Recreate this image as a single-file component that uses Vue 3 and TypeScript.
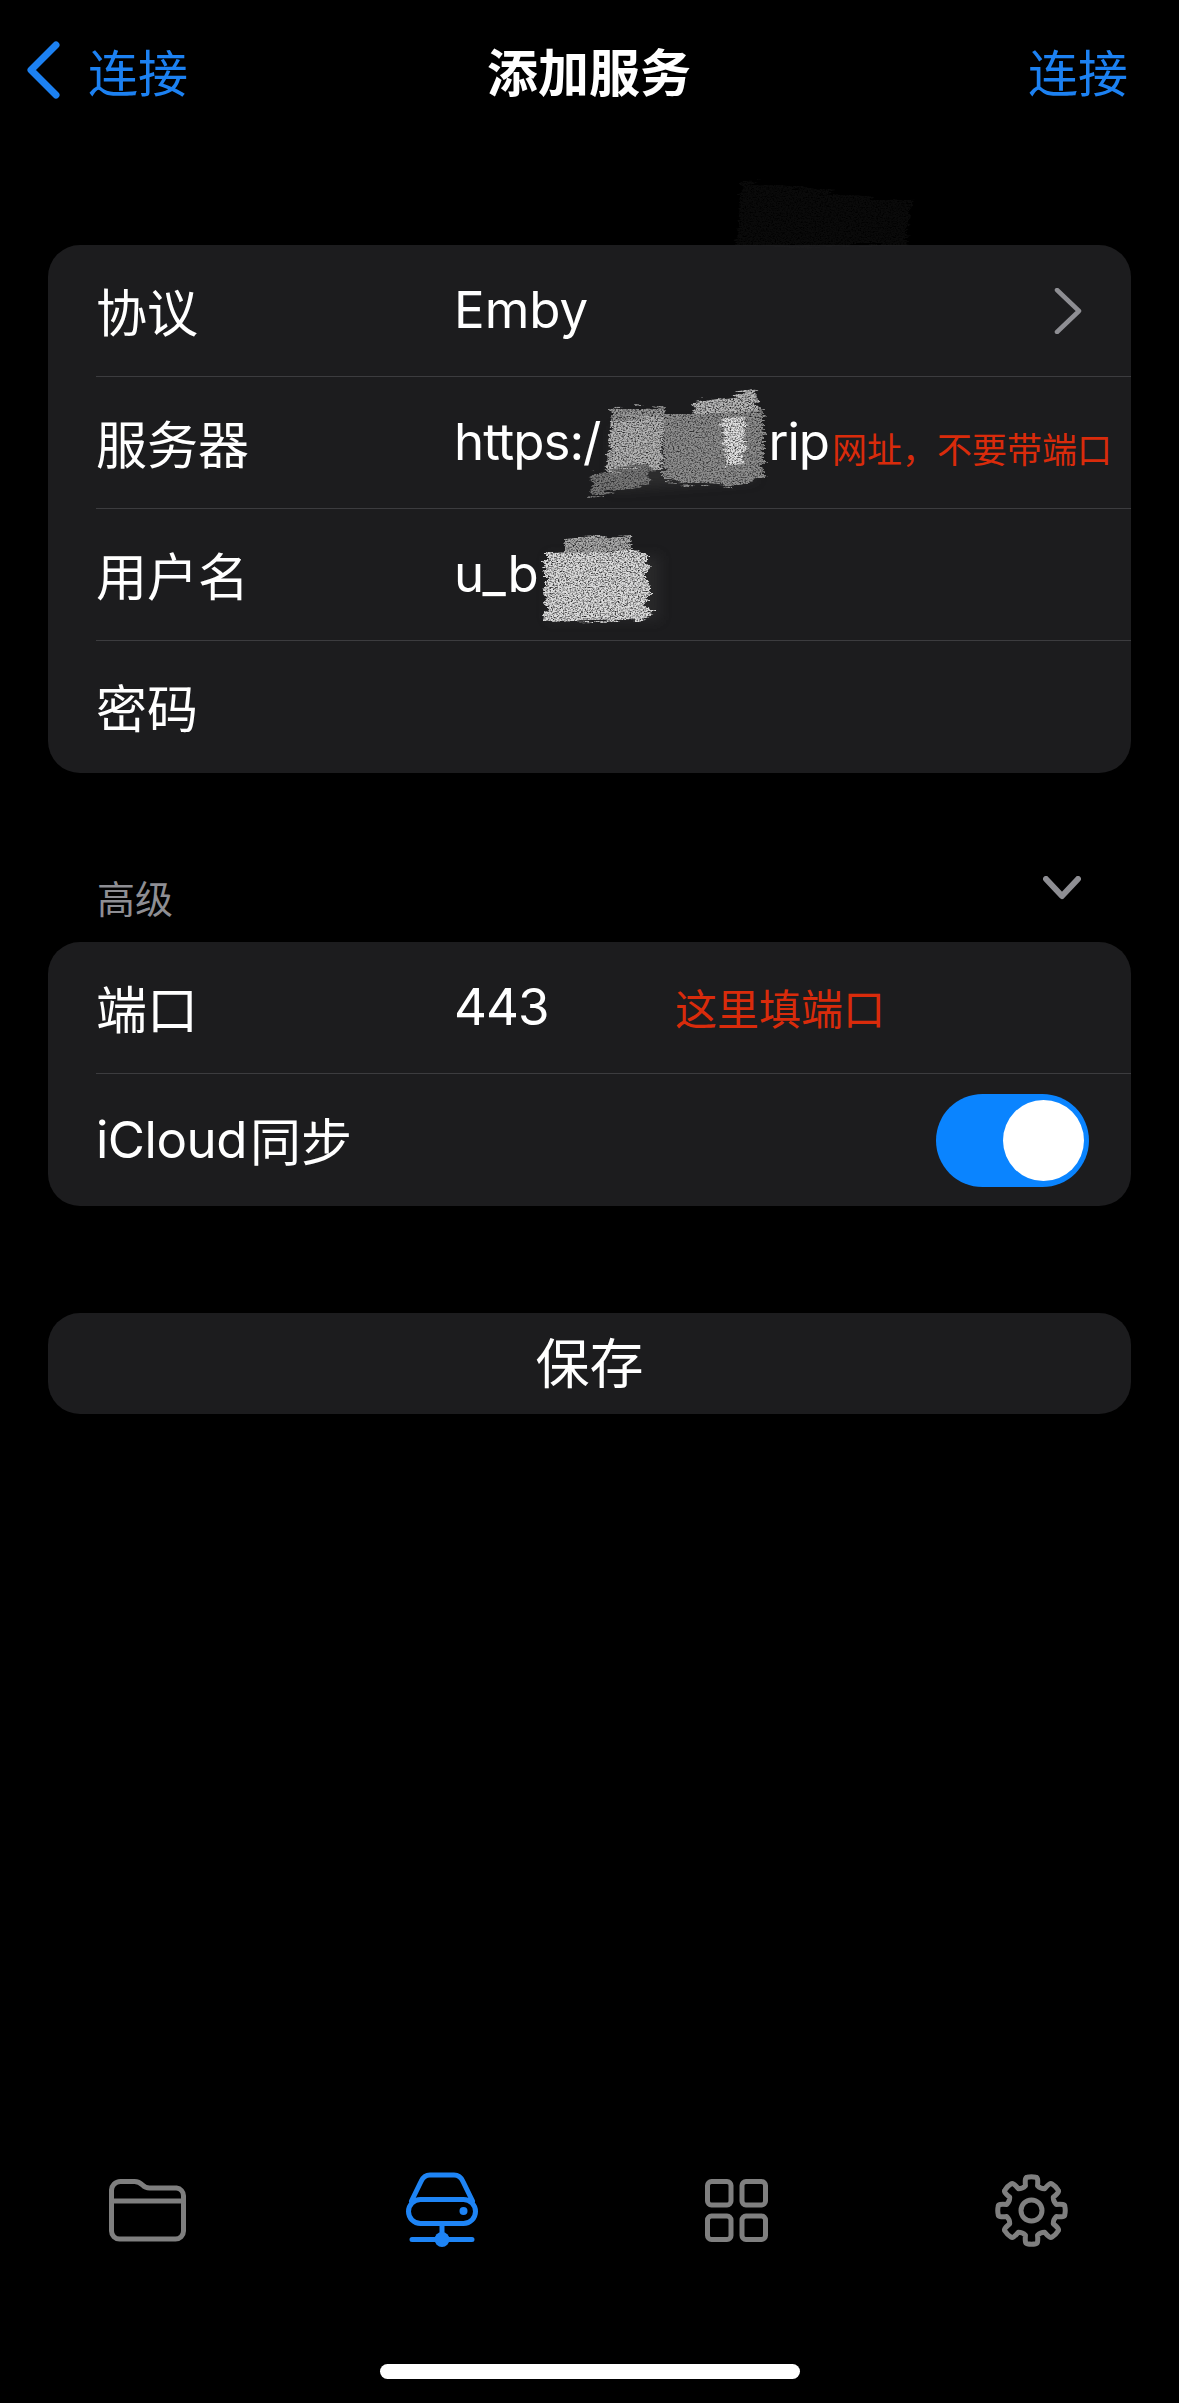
<script setup lang="ts">
type Tab = { id: string; active?: boolean };

const tabs: Tab[] = [{ id: 'files' }, { id: 'server', active: true }, { id: 'grid' }, { id: 'settings' }];

// eight rounded teeth around the centre of a 73px box
function gearPath(): string {
  const c = 36.5;
  const outer = 33.5;
  const inner = 25.5;
  const pt = (r: number, a: number) => `${(c + r * Math.cos(a)).toFixed(2)} ${(c + r * Math.sin(a)).toFixed(2)}`;
  const step = Math.PI / 4;
  let d = '';
  for (let i = 0; i < 8; i++) {
    const a = i * step - Math.PI / 2;
    d += i === 0 ? `M${pt(inner, a - 0.24)}` : `L${pt(inner, a - 0.24)}`;
    d += `Q${pt(outer + 1, a - 0.2)} ${pt(outer, a - 0.13)}`;
    d += `Q${pt(outer + 0.8, a)} ${pt(outer, a + 0.13)}`;
    d += `Q${pt(outer + 1, a + 0.2)} ${pt(inner, a + 0.24)}`;
    d += `Q${pt(inner - 2, a + step / 2)} ${pt(inner, a + step - 0.24)}`;
  }
  return d + 'Z';
}
const gear = gearPath();
</script>

<template>
  <div class="page">
    <header class="nav">
      <div class="nav-left">
        <svg class="back" width="34" height="58" viewBox="0 0 34 58">
          <path d="M30 4 5 29l25 25" />
        </svg>
        <span>连接</span>
      </div>
      <div class="nav-title">添加服务</div>
      <div class="nav-right">连接</div>
    </header>

    <main class="content">
      <section class="card">
        <div class="row">
          <span class="label">协议</span>
          <span class="value">Emby</span>
          <svg class="arrow" width="28" height="46" viewBox="0 0 28 46">
            <path d="M3 2 25 23 3 44" />
          </svg>
        </div>
        <div class="row">
          <span class="label">服务器</span>
          <span class="value url">https:/<i class="gap"></i>rip</span>
          <span class="note note-small">网址，不要带端口</span>
        </div>
        <div class="row">
          <span class="label">用户名</span>
          <span class="value">u_b</span>
        </div>
        <div class="row">
          <span class="label">密码</span>
        </div>
      </section>

      <div class="section-head">
        <span>高级</span>
        <svg width="38" height="24" viewBox="0 0 38 24">
          <path d="M3 3 19 20 35 3" />
        </svg>
      </div>

      <section class="card">
        <div class="row">
          <span class="label">端口</span>
          <span class="value port">443</span>
          <span class="note">这里填端口</span>
        </div>
        <div class="row">
          <span class="label"><span class="latin">iCloud</span><i class="thin"></i>同步</span>
          <div class="toggle"><div class="knob"></div></div>
        </div>
      </section>

      <button class="save"><span>保存</span></button>
    </main>

    <nav class="tabs">
      <div v-for="t in tabs" :key="t.id" class="tab" :class="{ active: t.active }">
        <svg v-if="t.id === 'files'" width="77" height="63" viewBox="0 0 77 63">
          <path d="M2.5 12a9 9 0 0 1 9-9.500h14c4 0 6 1.500 8 3.500 2 2 4 3 7 3h27a8 8 0 0 1 7 8v35a8 8 0 0 1-8 8h-56a8 8 0 0 1-8-8z" />
          <path d="M2.500 22h72" />
        </svg>
        <svg v-else-if="t.id === 'server'" width="72" height="76" viewBox="0 0 72 76">
          <path d="M5.500 29 15 9.500C17 5 19.500 3 24 3h24c4.500 0 7 2 9 6.500L66.500 29" />
          <rect x="2.500" y="27.500" width="67" height="24" rx="12" />
          <path d="M36 51.500V67M6 67.500h60" />
          <circle class="fill" cx="57.500" cy="39" r="4" />
          <circle class="fill" cx="36" cy="67.500" r="7.500" />
        </svg>
        <svg v-else-if="t.id === 'grid'" width="63" height="63" viewBox="0 0 63 63">
          <rect x="2.500" y="2.500" width="23.500" height="23.500" rx="4" />
          <rect x="37" y="2.500" width="23.500" height="23.500" rx="4" />
          <rect x="2.500" y="37" width="23.500" height="23.500" rx="4" />
          <rect x="37" y="37" width="23.500" height="23.500" rx="4" />
        </svg>
        <svg v-else width="73" height="73" viewBox="0 0 73 73">
          <path :d="gear" />
          <circle cx="36.500" cy="36.500" r="10.500" />
        </svg>
      </div>
    </nav>

    <div class="home-bar"></div>

    <!-- hand drawn redaction marks, laid over the screenshot -->
    <svg class="marks" width="1179" height="700" viewBox="0 0 1179 700">
      <defs>
        <filter id="chalk" x="-15%" y="-15%" width="130%" height="130%">
          <feTurbulence type="fractalNoise" baseFrequency="0.03 0.28" numOctaves="3" seed="7" result="rough" />
          <feDisplacementMap in="SourceGraphic" in2="rough" scale="14" xChannelSelector="R" yChannelSelector="G" result="shape" />
          <feTurbulence type="fractalNoise" baseFrequency="0.6 0.8" numOctaves="2" seed="4" result="n" />
          <feColorMatrix in="n" type="matrix" values="0 0 0 0 1  0 0 0 0 1  0 0 0 0 1  1.8 1.8 0 0 -1" result="grain" />
          <feComposite in="shape" in2="grain" operator="in" />
          <feGaussianBlur stdDeviation="0.6" />
        </filter>
        <filter id="soft" x="-30%" y="-30%" width="160%" height="160%"><feGaussianBlur stdDeviation="6" /></filter>
      </defs>
      <g filter="url(#chalk)" opacity="0.28">
        <polygon points="742,182 912,202 905,246 736,246" fill="#262626" />
      </g>
      <polygon points="548,556 660,556 660,620 548,620" fill="#3a3a3a" filter="url(#soft)" opacity="0.4" />
      <polygon points="612,430 755,418 755,480 612,490" fill="#383838" filter="url(#soft)" opacity="0.6" />
      <g filter="url(#chalk)">
        <polygon points="612,409 665,407 664,418 608,420" fill="#9a9a9a" />
        <polygon points="612,420 664,417 662,470 606,472" fill="#b4b4b4" />
        <polygon points="592,474 651,464 650,484 590,497" fill="#777" />
        <polygon points="694,402 756,392 758,412 693,418" fill="#b8b8b8" />
        <polygon points="664,416 764,411 764,476 730,487 664,482" fill="#8e8e8e" />
        <polygon points="722,418 746,416 744,462 726,466" fill="#e0e0e0" />
        <polygon points="564,538 630,534 631,552 564,556" fill="#aaa" />
        <polygon points="545,553 648,550 648,612 660,612 640,620 545,622" fill="#dcdcdc" />
      </g>
    </svg>
  </div>
</template>

<style>
html,
body {
  background: #000;
}
</style>

<style scoped>
.page {
  position: relative;
  width: 1179px;
  height: 2403px;
  display: flex;
  flex-direction: column;
  overflow: hidden;
  background: #000;
  color: #fff;
  font-family: Inter, "Noto Sans CJK SC", sans-serif;
  font-weight: 400;
}

.nav {
  height: 146px;
  flex: none;
  display: grid;
  grid-template-columns: 461px auto 1fr;
  align-items: center;
  padding: 0 51px 6px 26px;
  box-sizing: border-box;
  font-size: 50px;
  color: #1c81f2;
}

.nav-left {
  display: flex;
  align-items: center;
  gap: 28px;
}

.back path {
  fill: none;
  stroke: #1c81f2;
  stroke-width: 7;
  stroke-linecap: round;
  stroke-linejoin: round;
}

.nav-title {
  color: #fff;
  font-weight: 700;
  font-size: 51px;
}

.nav-right {
  text-align: right;
}

.content {
  padding: 99px 48px 0;
  display: flex;
  flex-direction: column;
}

.card {
  background: #1c1c1e;
  border-radius: 32px;
  overflow: hidden;
}

.row {
  height: 132px;
  box-sizing: border-box;
  margin-left: 48px;
  padding-bottom: 2px;
  display: flex;
  align-items: center;
  border-bottom: 1px solid #3c3c3f;
  font-size: 51px;
  white-space: nowrap;
}

.row:last-child {
  border-bottom: 0;
}

.label {
  width: 358px;
  flex: none;
  display: inline-flex;
  align-items: center;
}

.latin {
  letter-spacing: -0.5px;
}

.thin {
  width: 3px;
}

.value {
  display: inline-flex;
  align-items: center;
}

.url {
  letter-spacing: -1px;
}

.gap {
  width: 168px;
}

.port {
  width: 221px;
  letter-spacing: -1px;
}

.note {
  color: #d92b0b;
  font-size: 42px;
  letter-spacing: 0;
}

.note-small {
  font-size: 35px;
  margin-left: 3px;
  padding-top: 12px;
}

.arrow {
  margin-left: auto;
  margin-right: 49px;
  margin-top: 2px;
}

.arrow path {
  fill: none;
  stroke: #8e8e93;
  stroke-width: 4.500;
  stroke-linecap: round;
  stroke-linejoin: round;
}

.section-head {
  height: 169px;
  box-sizing: border-box;
  display: flex;
  justify-content: space-between;
  align-items: flex-end;
  padding: 0 50px 18px 49px;
  font-size: 38px;
  color: #8e8e93;
}

.section-head svg {
  margin-bottom: 24px;
}

.section-head path {
  fill: none;
  stroke: #8e8e93;
  stroke-width: 6;
  stroke-linecap: round;
  stroke-linejoin: round;
}

.toggle {
  margin-left: auto;
  margin-right: 42px;
  margin-top: 3px;
  width: 153px;
  height: 93px;
  border-radius: 47px;
  background: #0a84ff;
  display: flex;
  align-items: center;
  justify-content: flex-end;
  padding-right: 5px;
  box-sizing: border-box;
}

.knob {
  width: 81px;
  height: 81px;
  border-radius: 50%;
  background: #fff;
}

.save {
  margin-top: 107px;
  height: 101px;
  border: 0;
  padding: 0 0 6px;
  border-radius: 32px;
  background: #1c1c1e;
  color: #fff;
  font: inherit;
  font-size: 54px;
}

.tabs {
  margin-top: auto;
  display: grid;
  grid-template-columns: repeat(4, 1fr);
  align-items: center;
  height: 76px;
  margin-bottom: 155px;
}

.tab {
  display: flex;
  justify-content: center;
  color: #7f7f7f;
}

.tab.active {
  color: #1e84f5;
}

.tab svg * {
  fill: none;
  stroke: currentColor;
  stroke-width: 5;
  stroke-linecap: round;
  stroke-linejoin: round;
}

.tab svg .fill {
  fill: currentColor;
  stroke: none;
}

.home-bar {
  position: absolute;
  left: 380px;
  top: 2364px;
  width: 420px;
  height: 15px;
  border-radius: 8px;
  background: #fff;
}

.marks {
  position: absolute;
  left: 0;
  top: 0;
  pointer-events: none;
}
</style>
